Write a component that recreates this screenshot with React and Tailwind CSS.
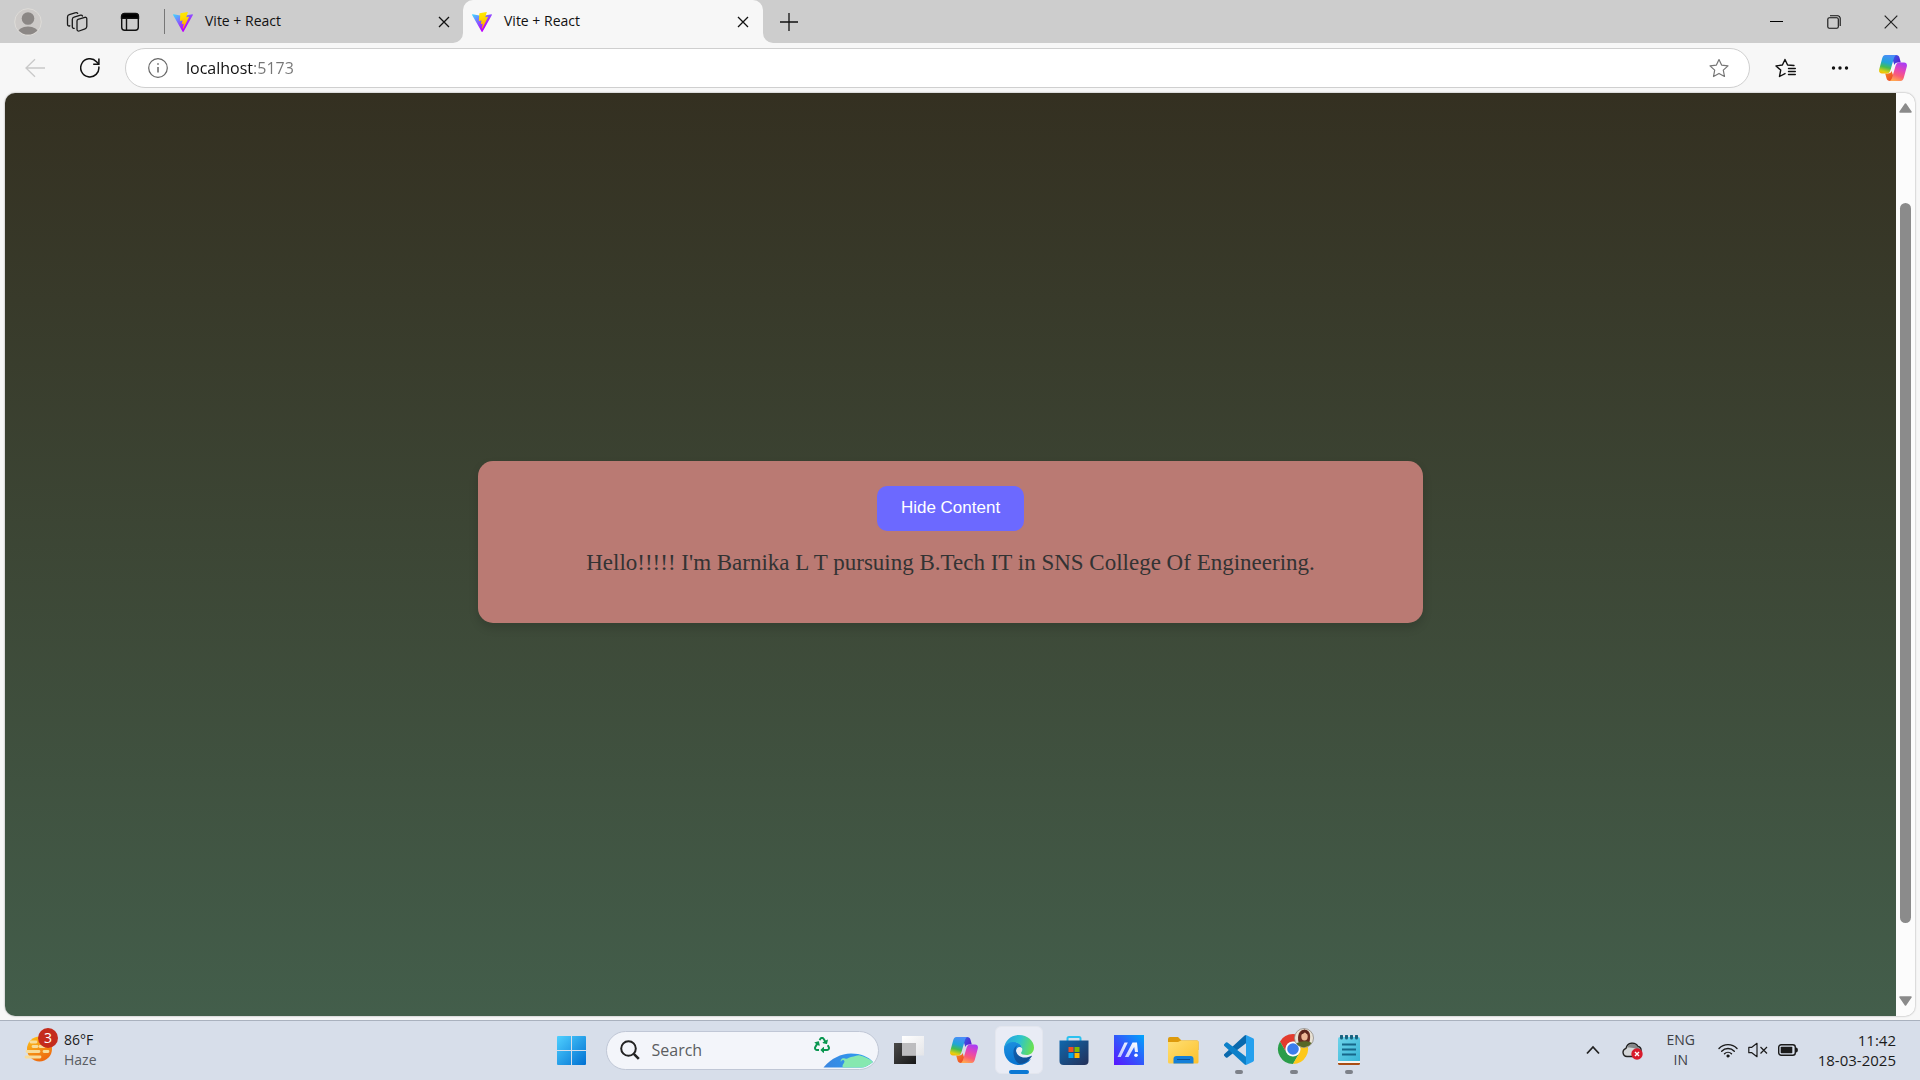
import React, { useState } from "react";
import { FaRecycle } from "react-icons/fa";

const ui = "font-['Open_Sans','Noto_Sans',sans-serif]";

function ViteLogo({ id }) {
  return (
    <svg viewBox="0 0 256 257" className="h-5 w-5 shrink-0" aria-hidden="true">
      <defs>
        <linearGradient id={`${id}a`} x1="-.8%" x2="57.6%" y1="7.6%" y2="78.4%">
          <stop offset="0%" stopColor="#41D1FF" />
          <stop offset="100%" stopColor="#BD00FF" />
        </linearGradient>
        <linearGradient id={`${id}b`} x1="43.4%" x2="50.3%" y1="2.2%" y2="89%">
          <stop offset="0%" stopColor="#FFEA00" />
          <stop offset="35%" stopColor="#FFDD00" />
          <stop offset="100%" stopColor="#FFA800" />
        </linearGradient>
      </defs>
      <path fill={`url(#${id}a)`} d="M255.153 37.938L134.897 252.976c-2.483 4.44-8.862 4.466-11.382.048L.875 37.958c-2.746-4.814 1.371-10.646 6.827-9.67l120.385 21.517a6.537 6.537 0 0 0 2.322-.004l117.867-21.483c5.438-.991 9.574 4.796 6.877 9.62Z" />
      <path fill={`url(#${id}b)`} d="M185.432.063L96.44 17.501a3.268 3.268 0 0 0-2.634 3.014l-5.474 92.456a3.268 3.268 0 0 0 3.997 3.378l24.777-5.718c2.318-.535 4.413 1.507 3.936 3.838l-7.361 36.047c-.495 2.426 1.782 4.5 4.151 3.78l15.304-4.649c2.372-.72 4.652 1.36 4.15 3.788l-11.698 56.621c-.732 3.542 3.979 5.473 5.943 2.437l1.313-2.028l72.516-144.72c1.215-2.423-.88-5.186-3.54-4.672l-25.505 4.922c-2.396.462-4.435-1.77-3.759-4.114l16.646-57.705c.677-2.35-1.37-4.583-3.769-4.113Z" />
    </svg>
  );
}

function CloseIcon() {
  return (
    <svg viewBox="0 0 12 12" className="h-3 w-3" aria-hidden="true">
      <path d="M1 1l10 10M11 1L1 11" stroke="#111" strokeWidth="1.3" fill="none" />
    </svg>
  );
}

function Tab({ id, active }) {
  return (
    <div className={active ? "relative flex h-full w-[300px] items-center rounded-t-[10px] bg-[#f7f7f7] pl-[9px] pr-[10px]" : "relative flex h-full w-[298px] items-center pl-2 pr-[9px]"}>
      {active && (
        <>
          <svg viewBox="0 0 10 10" className="absolute -left-[10px] bottom-0 h-[10px] w-[10px]" aria-hidden="true">
            <path d="M10 0v10H0A10 10 0 0 0 10 0Z" fill="#f7f7f7" />
          </svg>
          <svg viewBox="0 0 10 10" className="absolute -right-[10px] bottom-0 h-[10px] w-[10px]" aria-hidden="true">
            <path d="M0 0v10h10A10 10 0 0 1 0 0Z" fill="#f7f7f7" />
          </svg>
        </>
      )}
      <ViteLogo id={id} />
      <span className="ml-3 flex-1 pb-0.5 text-sm leading-5 text-[#111]">Vite + React</span>
      <button aria-label="Close tab" className="flex h-5 w-5 items-center justify-center">
        <CloseIcon />
      </button>
    </div>
  );
}

function Copilot({ id, className }) {
  return (
    <svg viewBox="0 0 28 26" className={className} aria-hidden="true">
      <defs>
        <linearGradient id={`${id}l`} x1=".5" y1="0" x2=".25" y2="1">
          <stop offset="0" stopColor="#4a8df8" />
          <stop offset=".4" stopColor="#1fa5d8" />
          <stop offset=".65" stopColor="#44bd52" />
          <stop offset=".9" stopColor="#e3cf10" />
          <stop offset="1" stopColor="#f8b800" />
        </linearGradient>
        <linearGradient id={`${id}r`} x1=".7" y1="0" x2=".35" y2="1">
          <stop offset="0" stopColor="#a93cf5" />
          <stop offset=".4" stopColor="#e345b8" />
          <stop offset=".7" stopColor="#fa5c78" />
          <stop offset="1" stopColor="#ffa650" />
        </linearGradient>
        <linearGradient id={`${id}t`} x1="0" y1="0" x2="1" y2=".6">
          <stop offset="0" stopColor="#2c6be8" />
          <stop offset="1" stopColor="#5a1fd2" />
        </linearGradient>
        <linearGradient id={`${id}b`} x1="0" y1="0" x2="1" y2="1">
          <stop offset="0" stopColor="#f98c1c" />
          <stop offset="1" stopColor="#e8382c" />
        </linearGradient>
      </defs>
      <path d="M12 0h5c2 0 3 1 3.500 2.700L21.800 7.500H19c-2 0-3 .8-3.600 2.500L12 0Z" fill={`url(#${id}t)`} />
      <path d="M16 26h-5c-2 0-3-1-3.500-2.700L6.200 18.500H9c2 0 3-.8 3.600-2.500L16 26Z" fill={`url(#${id}b)`} />
      <path d="M6.500 0H17.500c-1.500.5-2.200 2-2.800 4L11.500 15c-.7 2.500-2 3.500-4 3.500H3C.5 18.500-.5 16.500.3 14L3 4C3.700 1.500 4.500 0 6.500 0Z" fill={`url(#${id}l)`} />
      <path d="M21.500 26H10.500c1.500-.5 2.200-2 2.800-4l3.200-11c.7-2.500 2-3.500 4-3.500H25c2.500 0 3.500 2 2.700 4.500L25 22c-.7 2.500-1.500 4-3.500 4Z" fill={`url(#${id}r)`} />
    </svg>
  );
}

const star = "M10 1.500l2.600 5.600 6.400.8-4.700 4.200 1.200 6.400L10 15.400 4.500 18.500l1.200-6.400L1 7.900l6.400-.8Z";

function TabStrip() {
  return (
    <header className="flex h-[43px] items-center bg-[#cdcdcd]">
      <button aria-label="Profile" className="ml-[14px]">
        <svg viewBox="0 0 28 28" className="h-7 w-7">
          <defs><clipPath id="pf"><circle cx="14" cy="14" r="12.600" /></clipPath></defs>
          <circle cx="14" cy="14" r="13.300" fill="#cdcac8" stroke="#dedcd8" strokeWidth="1" />
          <circle cx="14" cy="10.500" r="6.300" fill="#8b8785" />
          <ellipse cx="14" cy="25" rx="10.500" ry="6.500" fill="#8b8785" clipPath="url(#pf)" />
        </svg>
      </button>
      <button aria-label="Workspaces" className="ml-6">
        <svg viewBox="0 0 22 22" className="h-[22px] w-[22px]" fill="none" stroke="#1a1a1a" strokeWidth="1.300" strokeLinejoin="round" strokeLinecap="round">
          <path d="M12 8.300l6.800-2a1.600 1.600 0 0 1 2 1.500v7.700a2.500 2.500 0 0 1-1.700 2.300l-6 2.200a1.600 1.600 0 0 1-2.100-1.500V9.900A1.700 1.700 0 0 1 12 8.300Z" />
          <path d="M8.200 17.300a1.600 1.600 0 0 1-1.900-1.600V8.500a2.500 2.500 0 0 1 1.800-2.300l6.500-2a1.600 1.600 0 0 1 1.900.9" />
          <path d="M3.800 14.800A1.600 1.600 0 0 1 1.500 13.300V6a2.500 2.500 0 0 1 1.800-2.300l6.500-2a1.600 1.600 0 0 1 1.900.7" />
        </svg>
      </button>
      <button aria-label="Tab actions menu" className="ml-8">
        <svg viewBox="0 0 20 20" className="h-5 w-5" fill="none" stroke="#111" strokeWidth="1.400">
          <rect x="1.700" y="1.700" width="16.600" height="16.600" rx="3" />
          <path d="M1.500 6.200V4.500a3 3 0 0 1 3-3h11a3 3 0 0 1 3 3v1.700Z" fill="#000" />
          <path d="M6.500 6v12" />
        </svg>
      </button>
      <div className="ml-6 h-[25px] w-px bg-[#777]" />
      <Tab id="t1" />
      <Tab id="t2" active />
      <button aria-label="New tab" className="ml-[17px]">
        <svg viewBox="0 0 18 18" className="h-[18px] w-[18px]"><path d="M9 0v18M0 9h18" stroke="#111" strokeWidth="1.300" /></svg>
      </button>
      <div className="ml-auto flex h-full">
        <button aria-label="Minimize" className="flex w-[57px] items-center justify-center">
          <svg viewBox="0 0 13 13" className="h-[13px] w-[13px]"><path d="M0 6.500h13" stroke="#000" /></svg>
        </button>
        <button aria-label="Restore" className="flex w-[57px] items-center justify-center">
          <svg viewBox="0 0 14 14" className="h-[14px] w-[14px]" fill="none" stroke="#111" strokeWidth="1.100">
            <rect x=".8" y="2.700" width="10.500" height="10.500" rx="1.500" />
            <path d="M3 .8h7.700A2.500 2.500 0 0 1 13.200 3.300V11" />
          </svg>
        </button>
        <button aria-label="Close window" className="flex w-[58px] items-center justify-center">
          <svg viewBox="0 0 14 14" className="h-[14px] w-[14px]"><path d="M.7.7l12.600 12.600M13.300.7L.7 13.300" stroke="#222" strokeWidth="1.200" /></svg>
        </button>
      </div>
    </header>
  );
}

function Toolbar() {
  return (
    <div className="flex h-[50px] items-center bg-[#f7f7f7]">
      <button aria-label="Back" className="ml-[25px]" disabled>
        <svg viewBox="0 0 20 20" className="h-5 w-5" fill="none" stroke="#c9c9c9" strokeWidth="1.300"><path d="M20 10H1M10 1.200L1 10l9 8.800" /></svg>
      </button>
      <button aria-label="Refresh" className="ml-[35px]">
        <svg viewBox="0 0 20 20" className="h-5 w-5" fill="none" stroke="#111" strokeWidth="1.500">
          <path d="M18.800 8.500A9.100 9.100 0 1 1 16.500 3.700L18.700 6" />
          <path d="M18.900.5v5.700h-5.700" />
        </svg>
      </button>
      <div className="ml-[25px] flex h-10 flex-1 items-center rounded-full border border-[#cfcfcf] bg-white pl-[22px] pr-5">
        <button aria-label="View site information">
          <svg viewBox="0 0 20 20" className="h-5 w-5" fill="none" stroke="#666">
            <circle cx="10" cy="10" r="9.300" strokeWidth="1.200" />
            <path d="M10 9v5.500" strokeWidth="1.500" /><circle cx="10" cy="6" r=".5" />
          </svg>
        </button>
        <input
          aria-label="Address"
          defaultValue="localhost:5173"
          className="ml-[18px] h-6 min-w-0 flex-1 bg-linear-to-r from-[#111] from-[68px] to-[#767676] to-[68px] bg-clip-text text-base leading-6 text-transparent caret-black outline-none"
        />
        <button aria-label="Add to favorites">
          <svg viewBox="0 0 20 20" className="h-5 w-5" fill="none" stroke="#767676" strokeWidth="1.200" strokeLinejoin="round"><path d={star} /></svg>
        </button>
      </div>
      <button aria-label="Favorites" className="ml-[25px]">
        <svg viewBox="0 0 21 20" className="h-5 w-[21px]" fill="none" stroke="#111" strokeWidth="1.400" strokeLinejoin="round" strokeLinecap="round">
          <path d="M19 7.500l-6.400-.5L10 1.500 7.400 7 1 7.900l4.700 4.200-1.200 6.400L10 15.600" />
          <path d="M13.500 10.500h6.800M13.500 13.500h6.800M13.500 16.500h6.800" />
        </svg>
      </button>
      <button aria-label="Settings and more" className="ml-[35px]">
        <svg viewBox="0 0 18 18" className="h-[18px] w-[18px]" fill="#111"><circle cx="2.500" cy="9" r="1.700" /><circle cx="9" cy="9" r="1.700" /><circle cx="15.500" cy="9" r="1.700" /></svg>
      </button>
      <button aria-label="Copilot" className="ml-[30px] mr-[13px]"><Copilot id="c1" className="h-[26px] w-7" /></button>
    </div>
  );
}

function Scrollbar() {
  return (
    <div className="flex w-[19px] flex-col items-center rounded-r-[10px] bg-[#fcfcfc] py-[9px]">
      <button aria-label="Scroll up"><svg viewBox="0 0 13 11" className="h-[11px] w-[13px]"><path d="M6.500 2L12 10H1Z" fill="#8b8b8b" stroke="#8b8b8b" strokeLinejoin="round" strokeWidth="1.500" /></svg></button>
      <div className="flex-[90]" />
      <div className="w-[11px] flex-[721] rounded-full bg-[#8b8b8b]" />
      <div className="flex-[73]" />
      <button aria-label="Scroll down"><svg viewBox="0 0 13 11" className="h-[11px] w-[13px]"><path d="M6.500 9L12 1H1Z" fill="#8b8b8b" stroke="#8b8b8b" strokeLinejoin="round" strokeWidth="1.500" /></svg></button>
    </div>
  );
}

function Page() {
  const [open, setOpen] = useState(true);
  return (
    <div className="flex min-h-0 flex-1 bg-[#f7f7f7] px-[5px] pb-1">
      <div className="flex flex-1 overflow-hidden rounded-[10px] shadow-[0_0_2px_rgba(0,0,0,0.4)]">
        <main className="flex flex-1 items-center justify-center bg-linear-to-b from-[#343021] to-[#435e4b] pb-[26px]">
          <section className="flex w-1/2 flex-col items-center rounded-[15px] bg-[#ba7a73] p-[25px] shadow-[0_5px_10px_rgba(0,0,0,0.15)]">
            <button onClick={() => setOpen(!open)} className="rounded-[10px] bg-[#6c69ff] px-6 pt-[10px] pb-[11px] font-['Liberation_Sans',Arial,sans-serif] text-[17px] leading-6 text-white">
              {open ? "Hide Content" : "Show Content"}
            </button>
            {open && (
              <p className="mt-[18px] mb-[22px] font-['Liberation_Serif','Times_New_Roman',serif] text-[23px] leading-[27px] text-[#333]">
                Hello!!!!! I'm Barnika L T pursuing B.Tech IT in SNS College Of Engineering.
              </p>
            )}
          </section>
        </main>
        <Scrollbar />
      </div>
    </div>
  );
}

function EdgeIcon() {
  return (
    <svg viewBox="0 0 30 30" className="h-[30px] w-[30px]" aria-hidden="true">
      <defs>
        <linearGradient id="eg" x1="0" y1=".3" x2="1" y2=".5"><stop offset="0" stopColor="#259fe0" /><stop offset=".5" stopColor="#2cc3cf" /><stop offset="1" stopColor="#6be24f" /></linearGradient>
        <linearGradient id="eb" x1=".2" y1="0" x2=".5" y2="1"><stop offset="0" stopColor="#1b8fdf" /><stop offset="1" stopColor="#0872cf" /></linearGradient>
        <linearGradient id="ed" x1="0" y1="0" x2="1" y2="1"><stop offset="0" stopColor="#0f62b4" /><stop offset="1" stopColor="#114a8b" /></linearGradient>
      </defs>
      <path d="M0 14.500C0 9 4 6.500 8 6.500c6 0 10 3.500 10 6.500-2-2-6-1-6 3.500 0 5 4 9 9 9 2 0 4-.5 6-1.500-3 4-7.500 6-12 6C6.500 30 0 23.500 0 14.500Z" fill="url(#eb)" />
      <path d="M9.500 19c-.5-4 .5-7 4-9-1.500 2-2 4-1.500 6 .8 4 4.500 6.500 8.500 6.500 3 0 5-.8 6.500-1.600.6-.3 1 .1.700.6C25 26 20 29 16 29c-3.500-1-6-5-6.500-10Z" fill="url(#ed)" />
      <path d="M0 14C.5 6 7 0 15 0c8.500 0 15 6 15 12.500 0 5-3.800 7.500-7.500 7.500-3 0-5.500-.8-5.500-2 0-.8 1.300-1.300 1.300-3.500 0-4-4-7.500-9.300-7.500-4.500 0-8 3-9 7Z" fill="url(#eg)" />
    </svg>
  );
}

function StoreIcon() {
  return (
    <svg viewBox="0 0 30 30" className="h-[30px] w-[30px]" aria-hidden="true">
      <defs><linearGradient id="st" x1="0" y1="0" x2="1" y2="1"><stop offset="0" stopColor="#0f68ae" /><stop offset="1" stopColor="#243058" /></linearGradient></defs>
      <path d="M8.500 6V3.500a1.500 1.500 0 0 1 1.500-1.500h10a1.500 1.500 0 0 1 1.500 1.500V6" fill="none" stroke="#2cc1ef" strokeWidth="2" />
      <path d="M.5 5.500h29V26a4 4 0 0 1-4 4h-21a4 4 0 0 1-4-4Z" fill="url(#st)" />
      <path d="M9.500 12h5v5h-5Z" fill="#f25022" /><path d="M15.500 12h5v5h-5Z" fill="#7fba00" />
      <path d="M9.500 18h5v5h-5Z" fill="#00a4ef" /><path d="M15.500 18h5v5h-5Z" fill="#ffb900" />
    </svg>
  );
}

function MyAsusIcon() {
  return (
    <svg viewBox="0 0 30 30" className="h-[30px] w-[30px]" aria-hidden="true">
      <defs>
        <linearGradient id="ma" x1="0" y1="1" x2="1" y2="0"><stop offset="0" stopColor="#5a14ff" /><stop offset=".5" stopColor="#3158fb" /><stop offset="1" stopColor="#00a6fb" /></linearGradient>
        <linearGradient id="mb" x1="1" y1="0" x2="0" y2="1"><stop offset="0" stopColor="#fff" /><stop offset="1" stopColor="#b9c6ff" /></linearGradient>
      </defs>
      <path d="M0 0h30v30H0Z" fill="url(#ma)" />
      <path d="M10.500 7.500h3.300L6.800 22H3.500ZM18.500 7.500H23l1 9.500h-3l-.8-5L14.500 22h-3.600Z" fill="url(#mb)" />
      <circle cx="22" cy="20.300" r="1.800" fill="#fff" />
    </svg>
  );
}

function ExplorerIcon() {
  return (
    <svg viewBox="0 0 31 28" className="h-7 w-[31px]" aria-hidden="true">
      <defs><linearGradient id="fo" x1="0" y1="0" x2="1" y2="1"><stop offset="0" stopColor="#ffdf74" /><stop offset="1" stopColor="#fcc12c" /></linearGradient></defs>
      <path d="M0 3a2 2 0 0 1 2-2h8l3.500 3.500H29a1.500 1.500 0 0 1 1.500 1.500v8H0Z" fill="#dd9a0c" />
      <path d="M0 6h10l3-1.500h16A1.500 1.500 0 0 1 30.500 6v20a1.500 1.500 0 0 1-1.500 1.500H1.500A1.500 1.500 0 0 1 0 26Z" fill="url(#fo)" />
      <path d="M5.500 27.500V23a3 3 0 0 1 3-3h14a3 3 0 0 1 3 3v4.500Z" fill="#147fd8" />
      <path d="M9 23.500h13" stroke="#0b4f93" strokeWidth="1" />
    </svg>
  );
}

function VSCodeIcon() {
  return (
    <svg viewBox="0 0 30 30" className="h-[30px] w-[30px]" aria-hidden="true">
      <path d="M22 0v8.300L3.500 22.400a1.300 1.300 0 0 1-1.600 0L.4 21a1.300 1.300 0 0 1 0-1.900L20.600.6Z" fill="#0a69ad" />
      <path d="M22 30v-8.300L3.500 7.600a1.300 1.300 0 0 0-1.600 0L.4 9a1.300 1.300 0 0 0 0 1.900l20.200 18.500Z" fill="#0c80c9" />
      <path d="M22 0l7 3.300a1.800 1.800 0 0 1 1 1.700v20a1.800 1.800 0 0 1-1 1.700L22 30Z" fill="#25a0ee" />
    </svg>
  );
}

function ChromeIcon() {
  return (
    <svg viewBox="0 0 37 37" className="h-[37px] w-[37px]" aria-hidden="true">
      <g transform="translate(1 6)">
        <path d="M2 7.500A15 15 0 0 1 28 7.500H15A7.500 7.500 0 0 0 8.500 18.750Z" fill="#e33b2e" />
        <path d="M2 7.500L8.500 18.750A7.500 7.500 0 0 0 21.500 18.750L15 30A15 15 0 0 1 2 7.500Z" fill="#2a9d49" />
        <path d="M28 7.500A15 15 0 0 1 15 30L21.500 18.750A7.500 7.500 0 0 0 15 7.500Z" fill="#fdc81a" />
        <circle cx="15" cy="15" r="7.300" fill="#fff" /><circle cx="15" cy="15" r="5.800" fill="#3c7ded" />
      </g>
      <circle cx="27" cy="10" r="9.500" fill="#e9e2d4" stroke="#8f8b86" strokeWidth=".8" />
      <path d="M21.500 14C20 8 22 1.800 27.500 1.800S34 7 32.500 14Z" fill="#6b2c22" />
      <ellipse cx="27.500" cy="8.500" rx="3.200" ry="4" fill="#ecb595" />
      <path d="M24 6.500c2-.5 3.500-1.500 4-3 .5 1.500 1.500 2.500 3 3l-.5-3.500-3-1.500-3 1.500Z" fill="#5a241c" />
      <path d="M19.500 15.500c3-2.500 12-3 15-.5a9 9 0 0 1-15 .5Z" fill="#586727" />
    </svg>
  );
}

function NotepadIcon() {
  return (
    <svg viewBox="0 0 22 30" className="h-[30px] w-[22px]" aria-hidden="true">
      <defs><linearGradient id="np" x1="0" y1="0" x2="1" y2="1"><stop offset="0" stopColor="#6fd3ea" /><stop offset="1" stopColor="#36b4d6" /></linearGradient></defs>
      <path d="M0 24h22v4.500a1.500 1.500 0 0 1-1.500 1.500h-19A1.500 1.500 0 0 1 0 28.500Z" fill="#a94d14" />
      <path d="M0 24h22v4H0Z" fill="#f4f4f2" />
      <path d="M0 4a2 2 0 0 1 2-2h18a2 2 0 0 1 2 2v22H0Z" fill="url(#np)" />
      <path d="M4 9.500h14M4 14.500h14M4 19.500h14" stroke="#17678a" strokeWidth="1.800" />
      <path d="M3.500 1v2M8.500 1v2M13.500 1v2M18.500 1v2" stroke="#17617f" strokeWidth="3" strokeLinecap="round" />
    </svg>
  );
}

function TaskButton({ label, state, children }) {
  return (
    <button aria-label={label} className={state === "active" ? "relative flex h-12 w-12 items-center justify-center rounded-md border border-[#e3e6ee] bg-[#e9ecf5]" : "relative flex h-12 w-12 items-center justify-center"}>
      {children}
      {state === "active" && <span className="absolute -bottom-px h-1 w-5 rounded-full bg-[#0a78d4]" />}
      {state === "running" && <span className="absolute bottom-0 h-1 w-2 rounded-full bg-[#7d8189]" />}
    </button>
  );
}

function Taskbar() {
  return (
    <footer className="grid h-[60px] grid-cols-[1fr_auto_1fr] items-center border-t border-[#a9b1be] bg-[#d7deea] pb-px">
      <button className="flex h-12 items-center justify-self-start pl-6 text-left">
        <svg viewBox="0 0 34 46" className="h-[46px] w-[34px]" aria-hidden="true">
          <defs><linearGradient id="su" x1="0" y1="0" x2=".5" y2="1"><stop offset="0" stopColor="#ffc61a" /><stop offset="1" stopColor="#ee6c10" /></linearGradient></defs>
          <circle cx="15.500" cy="22" r="12.500" fill="url(#su)" />
          <path d="M7 15h5M9 19.500h4M3 24.500h12M20 24.500h4M2 30h14M16 19.500h4" stroke="#f7dc9a" strokeWidth="2.800" strokeLinecap="round" />
          <circle cx="24" cy="11" r="10" fill="#c42b1c" />
          <text x="24" y="16" textAnchor="middle" fontSize="14" fill="#fff">3</text>
        </svg>
        <span className="ml-[6px] flex flex-col pb-px text-sm leading-5">
          <span className="text-[#1b1b1b]">86°F</span>
          <span className="text-[#5a5d63]">Haze</span>
        </span>
      </button>

      <nav aria-label="Taskbar" className="flex items-center">
        <TaskButton label="Start">
          <svg viewBox="0 0 29 29" className="h-[29px] w-[29px]">
            <defs><linearGradient id="wn" x1="0" y1="0" x2="29" y2="29" gradientUnits="userSpaceOnUse"><stop offset="0" stopColor="#4fd0ff" /><stop offset="1" stopColor="#0070d2" /></linearGradient></defs>
            <path d="M1 0h13v14H0V1A1 1 0 0 1 1 0ZM15 0h13a1 1 0 0 1 1 1v13H15ZM0 15h14v14H1a1 1 0 0 1-1-1ZM15 15h14v13a1 1 0 0 1-1 1H15Z" fill="url(#wn)" />
          </svg>
        </TaskButton>
        <label className="mr-[6px] ml-[10px] flex h-[39px] w-[273px] items-center overflow-hidden rounded-full border border-[#c0c7d6] bg-[#f3f5fa] pl-[13px] pr-1">
          <svg viewBox="0 0 20 20" className="h-5 w-5 shrink-0" fill="none" stroke="#222"><circle cx="8.500" cy="8.500" r="7.300" strokeWidth="2" /><path d="M13.800 13.800l5 5" strokeWidth="2.600" /></svg>
          <input aria-label="Search" placeholder="Search" className="ml-3 w-0 flex-1 text-base leading-6 outline-none placeholder:text-[#5b5d61]" />
          <svg viewBox="0 0 60 37" className="h-[37px] w-[60px] shrink-0" aria-hidden="true">
            <defs><linearGradient id="gl" x1="0" y1="0" x2="1" y2="0"><stop offset="0" stopColor="#3a86e0" /><stop offset="1" stopColor="#2ba0f5" /></linearGradient></defs>
            <path d="M9.500 35.500C17 26.500 27 21.500 37 21.500s17 3 22 8.500c-4 3.500-8 5.500-12 5.500Z" fill="url(#gl)" />
            <path d="M29 35.500c-2-3 3-5 1-7-1-1-3 0-3 1.500-1-2 1-4.500 4-3.500 3 1 3-1 6-1.500 4-.6 5-1.500 8-1.800 5 .8 10 3.300 14 6.800-4 3.500-8 5.500-12 5.500Z" fill="#86e8b0" />
            <FaRecycle x="0" y="5" width="21" height="21" color="#0a9650" />
          </svg>
        </label>
        <div className="flex gap-[7px]">
          <TaskButton label="Task view">
            <svg viewBox="0 0 30 28" className="h-7 w-[30px]">
              <defs>
                <linearGradient id="td" x1="0" y1="0" x2="1" y2="1"><stop offset="0" stopColor="#4a4a4a" /><stop offset="1" stopColor="#181818" /></linearGradient>
                <linearGradient id="tw" x1="0" y1="0" x2="1" y2="1"><stop offset="0" stopColor="#fff" /><stop offset="1" stopColor="#e4e5e8" /></linearGradient>
              </defs>
              <path d="M0 7h22v21H0Z" fill="url(#td)" /><path d="M8 0h22v19.500H8Z" fill="url(#tw)" /><path d="M8 7h14v12.500H8Z" fill="#bdbdbf" />
            </svg>
          </TaskButton>
          <TaskButton label="Copilot"><Copilot id="c2" className="h-[26px] w-7" /></TaskButton>
          <TaskButton label="Microsoft Edge" state="active"><EdgeIcon /></TaskButton>
          <TaskButton label="Microsoft Store"><StoreIcon /></TaskButton>
          <TaskButton label="MyASUS"><MyAsusIcon /></TaskButton>
          <TaskButton label="File Explorer"><ExplorerIcon /></TaskButton>
          <TaskButton label="Visual Studio Code" state="running"><VSCodeIcon /></TaskButton>
          <TaskButton label="Google Chrome" state="running"><span className="-mt-[7px] ml-1"><ChromeIcon /></span></TaskButton>
          <TaskButton label="Notepad" state="running"><NotepadIcon /></TaskButton>
        </div>
      </nav>

      <div className="flex items-center justify-self-end pr-6 text-sm leading-5 text-[#1b1b1b]">
        <button aria-label="Show hidden icons"><svg viewBox="0 0 14 10" className="h-[10px] w-[14px]"><path d="M1 8.500l6-6.500 6 6.500" fill="none" stroke="#222" strokeWidth="1.800" /></svg></button>
        <button aria-label="OneDrive" className="ml-[22px]">
          <svg viewBox="0 0 21 20" className="h-5 w-[21px]">
            <path d="M5 16.500a4.200 4.200 0 0 1-1-8.200A6.500 6.500 0 0 1 16 6.500a4 4 0 0 1 3 4.500L12 16.500Z" fill="#d4d6d8" stroke="#222" strokeWidth="1.400" />
            <path d="M5 7.500C7 3 13 2.500 15.500 7c2 0 3 2 3 4-3-2-7-3.500-13.500-3.500Z" fill="#858789" />
            <circle cx="15" cy="14" r="5.700" fill="#d81b2c" /><path d="M13 12l4 4M17 12l-4 4" stroke="#fff" strokeWidth="1.400" />
          </svg>
        </button>
        <button className="ml-[22px] flex w-8 flex-col items-center pb-px text-[#3d4046]"><span>ENG</span><span>IN</span></button>
        <button aria-label="Network, sound and battery" className="ml-[21px] flex items-center gap-[10px]">
          <svg viewBox="0 0 20 16" className="h-4 w-5" fill="none" stroke="#1b1b1b" strokeWidth="1.400" strokeLinecap="round">
            <path d="M1 6.500a12.500 12.500 0 0 1 18 0M3.700 9.200a8.800 8.800 0 0 1 12.600 0M6.500 11.800a5 5 0 0 1 7 0" /><circle cx="10" cy="14" r="1.300" fill="#1b1b1b" strokeWidth=".5" />
          </svg>
          <svg viewBox="0 0 20 16" className="h-4 w-5" fill="none" stroke="#1b1b1b" strokeWidth="1.200" strokeLinejoin="round">
            <path d="M.8 5.300h3L9 1.300v13.400l-5.200-4h-3Z" /><path d="M12.500 5l6.500 6.500M19 5l-6.500 6.500" />
          </svg>
          <svg viewBox="0 0 20 12" className="h-3 w-5"><rect x=".7" y=".7" width="16.600" height="10.600" rx="2.500" fill="none" stroke="#1b1b1b" strokeWidth="1.400" /><rect x="2.700" y="2.700" width="11.600" height="6.600" rx=".8" fill="#1b1b1b" /><path d="M18 3.500c2.500 0 2.500 5 0 5Z" fill="#1b1b1b" /></svg>
        </button>
        <button className="ml-5 flex flex-col items-end pb-px text-[15px] leading-5"><span>11:42</span><span>18-03-2025</span></button>
      </div>
    </footer>
  );
}

export default function App() {
  return (
    <div className={`flex h-screen flex-col overflow-hidden ${ui}`}>
      <TabStrip />
      <Toolbar />
      <Page />
      <Taskbar />
    </div>
  );
}
